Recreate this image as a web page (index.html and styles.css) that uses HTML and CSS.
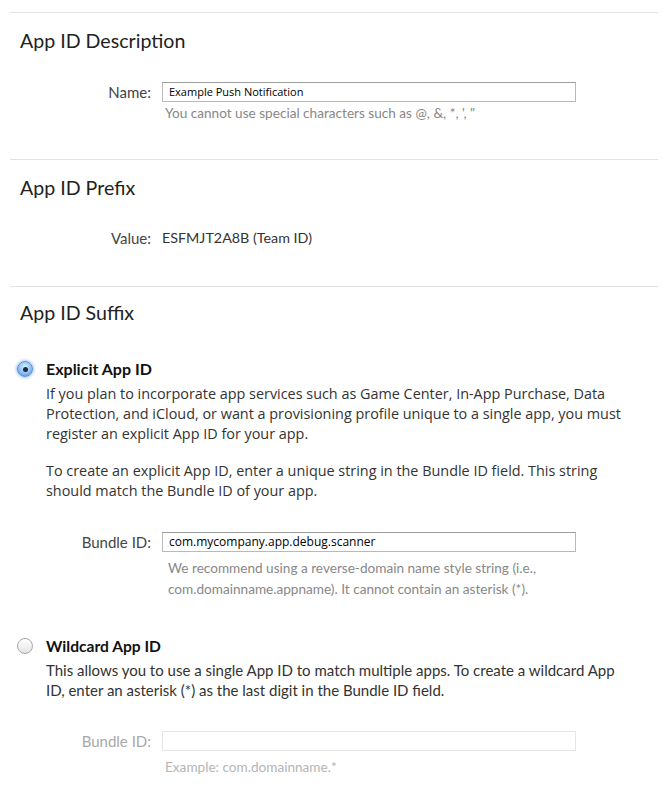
FILE: index.html
```html
<!DOCTYPE html>
<html>
<head>
<meta charset="utf-8">
<link rel="stylesheet" href="styles.css">
</head>
<body>
<div class="page">
  <section class="block block-desc">
    <h2 class="block-title">App ID Description</h2>
    <div class="field-row name-row">
      <label class="field-label">Name:</label>
      <div class="input">Example Push Notification</div>
    </div>
    <p class="hint hint-name">You cannot use special characters such as @, &amp;, *, ', "</p>
  </section>

  <section class="block block-prefix">
    <h2 class="block-title">App ID Prefix</h2>
    <div class="field-row value-row">
      <span class="field-label">Value:</span>
      <span class="value">ESFMJT2A8B (Team ID)</span>
    </div>
  </section>

  <section class="block block-suffix">
    <h2 class="block-title">App ID Suffix</h2>

    <div class="option option-explicit">
      <span class="radio radio-on"><span class="radio-dot"></span></span>
      <div class="option-body">
        <div class="option-title">Explicit App ID</div>
        <p class="option-text option-text-wide">If you plan to incorporate app services such as Game Center, In-App Purchase, Data Protection, and iCloud, or want a provisioning profile unique to a single app, you must register an explicit App ID for your app.</p>
        <p class="option-text option-text-wide option-text-2">To create an explicit App ID, enter a unique string in the Bundle ID field. This string should match the Bundle ID of your app.</p>
      </div>
    </div>
    <div class="field-row bundle-row">
      <label class="field-label">Bundle ID:</label>
      <div class="input input-bundle">com.mycompany.app.debug.scanner</div>
    </div>
    <p class="hint hint-bundle">We recommend using a reverse-domain name style string (i.e., com.domainname.appname). It cannot contain an asterisk (*).</p>

    <div class="option option-wild">
      <span class="radio radio-off"></span>
      <div class="option-body">
        <div class="option-title option-title-wild">Wildcard App ID</div>
        <p class="option-text option-text-narrow">This allows you to use a single App ID to match multiple apps. To create a wildcard App ID, enter an asterisk (*) as the last digit in the Bundle ID field.</p>
      </div>
    </div>
    <div class="field-row bundle-row">
      <label class="field-label field-label-disabled">Bundle ID:</label>
      <div class="input input-disabled"></div>
    </div>
    <p class="hint hint-example">Example: com.domainname.*</p>
  </section>
</div>
</body>
</html>
```

FILE: styles.css
```css
html, body {
  margin: 0;
  padding: 0;
  background: #ffffff;
}
body {
  font-family: "Lato", "Liberation Sans", sans-serif;
  color: #333333;
}
.page {
  padding: 12px 12px 0 10px;
}
.block {
  border-top: 1px solid #e3e3e3;
  padding-top: 18px;
  padding-bottom: 38px;
}
.block-desc {
  padding-top: 16px;
}
.block-prefix {
  padding-top: 16px;
}
.block-suffix {
  padding-top: 14px;
  padding-bottom: 0;
}
.block-title {
  margin: 0 0 0 10px;
  font-size: 19.6px;
  line-height: 24px;
  font-weight: normal;
  color: #222222;
}
.field-row {
  display: flex;
  align-items: center;
  gap: 11px;
}
.field-label {
  width: 141px;
  text-align: right;
  font-size: 15px;
  color: #444444;
}
.field-label-disabled {
  color: #a8a8a8;
}
.name-row {
  margin-top: 29px;
}
.value-row {
  margin-top: 28px;
  line-height: 20px;
}
.value {
  font-size: 14.3px;
  color: #333333;
}
.input {
  box-sizing: border-box;
  width: 414px;
  height: 20px;
  border: 1px solid #b9b9b9;
  border-top-color: #9d9d9d;
  padding: 0 6px;
  font-family: "Open Sans", "Liberation Sans", sans-serif;
  font-size: 11px;
  line-height: 18px;
  color: #000000;
  background: #ffffff;
}
.input-bundle {
  font-size: 12px;
}
.input-disabled {
  border-color: #e6e6e6;
}
.hint {
  margin: 0;
  margin-left: 155px;
  font-size: 13.6px;
  color: #888888;
}
.hint-name {
  margin-top: 3px;
  line-height: 16px;
}
.option {
  display: flex;
  align-items: flex-start;
  gap: 13px;
  padding-left: 7px;
}
.option-explicit {
  margin-top: 34px;
}
.option-wild {
  margin-top: 36px;
}
.radio {
  flex: none;
  box-sizing: border-box;
  width: 16px;
  height: 16px;
  border-radius: 50%;
  margin-top: 2px;
  display: flex;
  align-items: center;
  justify-content: center;
}
.radio-on {
  background: radial-gradient(circle at 50% 35%, #d8ecff 0%, #8fc1f3 55%, #4a8ee0 100%);
  border: 1px solid #5b8fd0;
  box-shadow: 0 0 3px 1px rgba(90, 150, 230, 0.55);
}
.radio-dot {
  width: 5px;
  height: 5px;
  border-radius: 50%;
  background: #1d2b45;
}
.radio-off {
  background: linear-gradient(#ffffff, #e4e4e4);
  border: 1px solid #a9a9a9;
}
.option-body {
  flex: 1;
}
.option-title {
  font-size: 16px;
  font-weight: bold;
  line-height: 20px;
  color: #111111;
}
.option-title-wild {
  font-size: 15.6px;
}
.option-text {
  margin: 4px 0 0 0;
  font-size: 15px;
  line-height: 20px;
  color: #333333;
  max-width: 588px;
}
.option-text-wide {
  font-family: "Open Sans", "Liberation Sans", sans-serif;
  font-size: 14.4px;
  margin-top: 5px;
}
.option-text-2 {
  margin-top: 17px;
}
.bundle-row {
  margin-top: 31px;
}
.hint-bundle {
  margin-top: 6px;
  margin-left: 158px;
  line-height: 21px;
  max-width: 400px;
}
.hint-example {
  margin-top: 8px;
  line-height: 16px;
  color: #b5b5b5;
}
```
